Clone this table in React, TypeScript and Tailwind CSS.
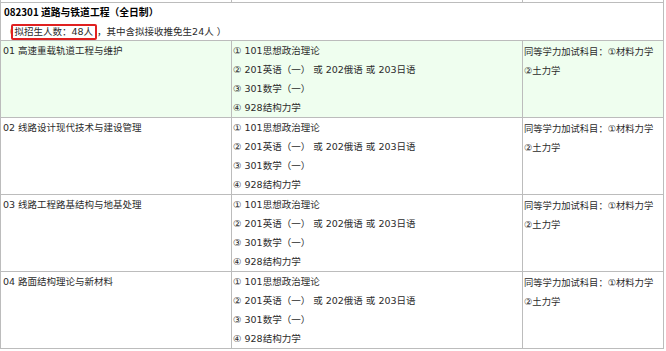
import React from "react";

const rows = [
  { name: "01 高速重载轨道工程与维护", green: true },
  { name: "02 线路设计现代技术与建设管理", green: false },
  { name: "03 线路工程路基结构与地基处理", green: false },
  { name: "04 路面结构理论与新材料", green: false },
];

const exams = [
  "① 101思想政治理论",
  "② 201英语（一） 或 202俄语 或 203日语",
  "③ 301数学（一）",
  "④ 928结构力学",
];

export default function App() {
  return (
    <div
      className="w-[666px] h-[351px] overflow-hidden bg-white text-[#2b2b2b] text-[9.5px] leading-[19px]"
      style={{ fontFamily: '"DejaVu Sans", "Noto Sans CJK SC", sans-serif' }}
    >
      <div className="w-[664px] border-l border-[#bcbcbc]">
        {/* tail of the previous row */}
        <div className="grid grid-cols-[231px_291px_141px] h-[3px] border-b border-[#bcbcbc]">
          <div className="border-r border-[#bcbcbc]" />
          <div className="border-r border-[#bcbcbc]" />
          <div className="border-r border-[#bcbcbc]" />
        </div>

        <div className="h-[38px] border-r border-b border-[#bcbcbc] px-[3px]">
          <div
            className="font-bold text-black text-[9.8px]"
            style={{ fontFamily: '"Noto Sans CJK SC", sans-serif' }}
          >
            082301 道路与铁道工程（全日制）
          </div>
          <div className="flex items-center">
            <span>（</span>
            <span className="border-2 border-[#e02020] rounded-[2px] leading-[12px] px-[2px] -ml-[3px]">
              拟招生人数：48人
            </span>
            <span>，其中含拟接收推免生24人 ）</span>
          </div>
        </div>

        {rows.map((row, i) => (
          <div
            key={i}
            className={`grid grid-cols-[231px_291px_141px] h-[77px] border-b border-[#bcbcbc] ${
              row.green ? "bg-[#effeef]" : "bg-white"
            }`}
          >
            <div className="border-r border-[#bcbcbc] pl-[2px]">{row.name}</div>
            <div className="border-r border-[#bcbcbc] pl-[1px]">
              {exams.map((e, j) => (
                <div key={j}>{e}</div>
              ))}
            </div>
            <div className="border-r border-[#bcbcbc] pl-[1px] pt-[1px] text-[9.3px]">
              <div>同等学力加试科目：①材料力学</div>
              <div>②土力学</div>
            </div>
          </div>
        ))}
      </div>
    </div>
  );
}
